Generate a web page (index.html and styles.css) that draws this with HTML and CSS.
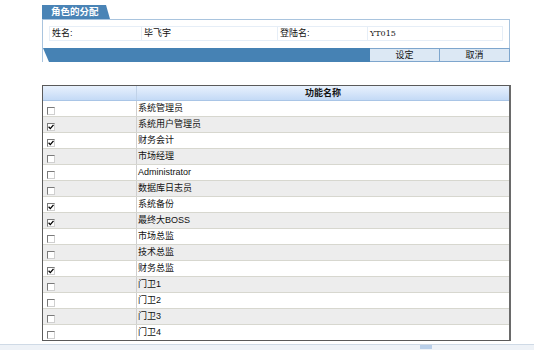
FILE: index.html
```html
<!DOCTYPE html>
<html>
<head>
<meta charset="utf-8">
<link rel="stylesheet" href="styles.css">
</head>
<body>
<div class="page">
  <div class="tab">角色的分配</div>
  <div class="panel">
    <div class="fields">
      <div class="cell c1">姓名:</div>
      <div class="cell c2">毕飞宇</div>
      <div class="cell c3">登陆名:</div>
      <div class="cell c4">YT015</div>
    </div>
    <div class="bar">
      <div class="bar-fill"></div>
      <div class="btn">设定</div>
      <div class="btn">取消</div>
    </div>
  </div>
  <div class="grid">
    <div class="head"><div class="hc1"></div><div class="hc2">功能名称</div></div>
    <div class="row"><div class="col1"><span class="cb"></span></div><div class="col2">系统管理员</div></div>
    <div class="row"><div class="col1"><span class="cb"><svg viewBox="0 0 6 6" width="6" height="6"><path d="M0.6 2.8 L2.3 4.6 L5.5 0.8" fill="none" stroke="#000" stroke-width="1.3"/></svg></span></div><div class="col2">系统用户管理员</div></div>
    <div class="row"><div class="col1"><span class="cb"><svg viewBox="0 0 6 6" width="6" height="6"><path d="M0.6 2.8 L2.3 4.6 L5.5 0.8" fill="none" stroke="#000" stroke-width="1.3"/></svg></span></div><div class="col2">财务会计</div></div>
    <div class="row"><div class="col1"><span class="cb"></span></div><div class="col2">市场经理</div></div>
    <div class="row"><div class="col1"><span class="cb"></span></div><div class="col2">Administrator</div></div>
    <div class="row"><div class="col1"><span class="cb"></span></div><div class="col2">数据库日志员</div></div>
    <div class="row"><div class="col1"><span class="cb"><svg viewBox="0 0 6 6" width="6" height="6"><path d="M0.6 2.8 L2.3 4.6 L5.5 0.8" fill="none" stroke="#000" stroke-width="1.3"/></svg></span></div><div class="col2">系统备份</div></div>
    <div class="row"><div class="col1"><span class="cb"><svg viewBox="0 0 6 6" width="6" height="6"><path d="M0.6 2.8 L2.3 4.6 L5.5 0.8" fill="none" stroke="#000" stroke-width="1.3"/></svg></span></div><div class="col2">最终大BOSS</div></div>
    <div class="row"><div class="col1"><span class="cb"></span></div><div class="col2">市场总监</div></div>
    <div class="row"><div class="col1"><span class="cb"></span></div><div class="col2">技术总监</div></div>
    <div class="row"><div class="col1"><span class="cb"><svg viewBox="0 0 6 6" width="6" height="6"><path d="M0.6 2.8 L2.3 4.6 L5.5 0.8" fill="none" stroke="#000" stroke-width="1.3"/></svg></span></div><div class="col2">财务总监</div></div>
    <div class="row"><div class="col1"><span class="cb"></span></div><div class="col2">门卫1</div></div>
    <div class="row"><div class="col1"><span class="cb"></span></div><div class="col2">门卫2</div></div>
    <div class="row"><div class="col1"><span class="cb"></span></div><div class="col2">门卫3</div></div>
    <div class="row"><div class="col1"><span class="cb"></span></div><div class="col2">门卫4</div></div>
  </div>
</div>
<div class="hscroll"><div class="thumb"></div></div>
</body>
</html>
```

FILE: styles.css
```css
html, body {
  margin: 0;
  padding: 0;
  background: #fff;
}
body {
  font-family: "Liberation Sans", "Noto Sans CJK SC", sans-serif;
  font-size: 9px;
  color: #111;
  width: 534px;
  height: 350px;
  overflow: hidden;
}
.page {
  padding-left: 42px;
  padding-top: 5px;
}
.tab {
  width: 68px;
  height: 14px;
  box-sizing: border-box;
  background: #4a84b6;
  color: #fff;
  font-weight: bold;
  font-size: 9.5px;
  line-height: 14px;
  padding-left: 9px;
  clip-path: polygon(0 0, calc(100% - 4px) 0, 100% 100%, 0 100%);
}
.panel {
  width: 468px;
  box-sizing: border-box;
  border: 1px solid #a9c4de;
  border-bottom: none;
  padding: 6px 6px 0 6px;
}
.fields {
  display: grid;
  grid-template-columns: 92px 136px 90px 135px;
  height: 15px;
  border: 1px solid #e6eef7;
  box-sizing: border-box;
}
.cell {
  line-height: 13px;
  padding-left: 2px;
  border-right: 1px solid #e6eef7;
  white-space: nowrap;
}
.c4 {
  border-right: none;
  font-family: "DejaVu Serif", "Liberation Serif", serif;
  font-size: 8px;
}
.bar {
  display: flex;
  height: 14px;
  margin: 7px -7px 0 -6px;
}
.bar-fill {
  flex: 1;
  background: #4682b4;
  clip-path: polygon(0 0, 100% 0, 100% 100%, 6px 100%);
}
.btn {
  width: 70px;
  box-sizing: border-box;
  background: #dce8f4;
  border: 1px solid #7ea6cd;
  border-left: none;
  text-align: center;
  line-height: 12px;
  color: #111;
}
.btn:first-of-type {
  border-left: 1px solid #7ea6cd;
}
.grid {
  margin-top: 23px;
  width: 469px;
  box-sizing: border-box;
  border: 1px solid #5a5a5a;
  border-right: 2px solid #6a6a6a;
}
.head, .row {
  display: grid;
  grid-template-columns: 94px 1fr;
}
.head {
  height: 15px;
  box-sizing: border-box;
  background: linear-gradient(#e8f1fd, #c4daf6);
  border-bottom: 1px solid #a9c5e6;
}
.hc1 {
  border-right: 1px solid #c0d2e8;
}
.hc2 {
  text-align: center;
  font-weight: bold;
  line-height: 14px;
}
.row {
  height: 16px;
  box-sizing: border-box;
  border-bottom: 1px solid #d7d7cf;
  background: #fff;
}
.row:nth-child(odd) {
  background: #ededed;
}
.row:last-child {
  border-bottom: none;
  height: 15px;
}
.col1 {
  border-right: 1px solid #cfcfcf;
  padding: 6px 0 0 4px;
}
.col2 {
  padding-left: 1px;
  line-height: 15px;
  white-space: nowrap;
}
.cb {
  display: flex;
  align-items: center;
  justify-content: center;
  width: 8px;
  height: 8px;
  box-sizing: border-box;
  background: #fff;
  border-top: 1px solid #7a7a7a;
  border-left: 1px solid #7a7a7a;
  border-right: 1px solid #d0d0d0;
  border-bottom: 1px solid #d0d0d0;
}
.hscroll {
  margin-top: 3px;
  height: 5px;
  background: #eef2f7;
  border-top: 1px solid #cfdae6;
  position: relative;
}
.thumb {
  position: absolute;
  left: 420px;
  top: 0;
  width: 12px;
  height: 4px;
  background: #b9cfe9;
}
```
